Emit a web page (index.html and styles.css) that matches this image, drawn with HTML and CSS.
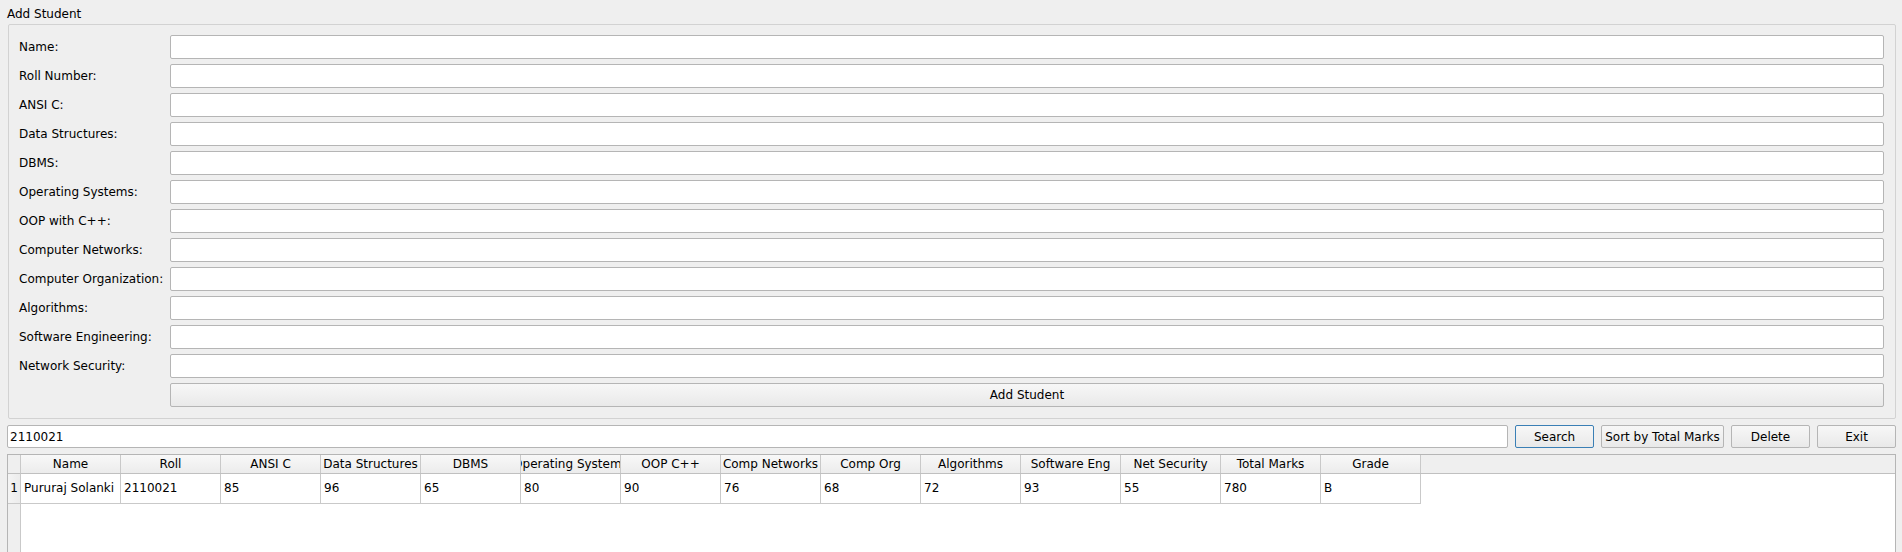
FILE: index.html
```html
<!DOCTYPE html>
<html>
<head>
<meta charset="utf-8">
<link rel="stylesheet" href="styles.css">
</head>
<body>
<div class="window">
  <div class="group-title">Add Student</div>
  <div class="group">
    <div class="form">
      <label class="lbl">Name:</label><input class="field" type="text">
      <label class="lbl">Roll Number:</label><input class="field" type="text">
      <label class="lbl">ANSI C:</label><input class="field" type="text">
      <label class="lbl">Data Structures:</label><input class="field" type="text">
      <label class="lbl">DBMS:</label><input class="field" type="text">
      <label class="lbl">Operating Systems:</label><input class="field" type="text">
      <label class="lbl">OOP with C++:</label><input class="field" type="text">
      <label class="lbl">Computer Networks:</label><input class="field" type="text">
      <label class="lbl">Computer Organization:</label><input class="field" type="text">
      <label class="lbl">Algorithms:</label><input class="field" type="text">
      <label class="lbl">Software Engineering:</label><input class="field" type="text">
      <label class="lbl">Network Security:</label><input class="field" type="text">
      <span></span><button class="btn add-btn">Add Student</button>
    </div>
  </div>
  <div class="search-row">
    <input class="field search" type="text" value="2110021">
    <button class="btn btn-focus w79">Search</button>
    <button class="btn w123">Sort by Total Marks</button>
    <button class="btn w79">Delete</button>
    <button class="btn w79">Exit</button>
  </div>
  <div class="table">
    <div class="corner"></div>
    <div class="hheader">
      <div class="hcell">Name</div>
      <div class="hcell">Roll</div>
      <div class="hcell">ANSI C</div>
      <div class="hcell">Data Structures</div>
      <div class="hcell">DBMS</div>
      <div class="hcell clip"><span>Operating Systems</span></div>
      <div class="hcell">OOP C++</div>
      <div class="hcell">Comp Networks</div>
      <div class="hcell">Comp Org</div>
      <div class="hcell">Algorithms</div>
      <div class="hcell">Software Eng</div>
      <div class="hcell">Net Security</div>
      <div class="hcell">Total Marks</div>
      <div class="hcell">Grade</div>
    </div>
    <div class="vheader">
      <div class="vcell">1</div>
    </div>
    <div class="tbody">
      <div class="trow">
        <div class="cell">Pururaj Solanki</div>
        <div class="cell">2110021</div>
        <div class="cell">85</div>
        <div class="cell">96</div>
        <div class="cell">65</div>
        <div class="cell">80</div>
        <div class="cell">90</div>
        <div class="cell">76</div>
        <div class="cell">68</div>
        <div class="cell">72</div>
        <div class="cell">93</div>
        <div class="cell">55</div>
        <div class="cell">780</div>
        <div class="cell">B</div>
      </div>
    </div>
  </div>
</div>
</body>
</html>
```

FILE: styles.css
```css
html, body {
  margin: 0;
  padding: 0;
  height: 100%;
  overflow: hidden;
  background: #efefef;
}

body {
  font-family: "DejaVu Sans", "Liberation Sans", sans-serif;
  font-size: 12px;
  color: #000;
}

.window {
  padding: 5px 6px 0 7px;
  display: flex;
  flex-direction: column;
}

.group-title {
  height: 19px;
  line-height: 18px;
}

.group {
  margin-left: 1px;
  border: 1px solid #d2d2d2;
  border-radius: 2px;
  padding: 10px 11px 11px 10px;
}

.form {
  display: grid;
  grid-template-columns: 151px 1fr;
  grid-auto-rows: 24px;
  row-gap: 5px;
  align-items: center;
}

.lbl {
  white-space: nowrap;
}

.field {
  box-sizing: border-box;
  height: 24px;
  border: 1px solid #b5b5b5;
  border-radius: 2px;
  background: #fff;
  font: inherit;
  color: #000;
  padding: 0 3px;
  margin: 0;
  outline: none;
  width: 100%;
}

.btn {
  box-sizing: border-box;
  height: 23px;
  border: 1px solid #b5b5b5;
  border-radius: 2px;
  background: linear-gradient(#f7f7f7, #e9e9e9);
  font: inherit;
  color: #000;
  padding: 0 3px;
  margin: 0;
  white-space: nowrap;
}

.add-btn {
  width: 100%;
  height: 24px;
  align-self: start;
}

.btn-focus {
  border-color: #3a7fb5;
}

.w79 { width: 79px; flex: none; }
.w123 { width: 123px; flex: none; }

.search-row {
  display: flex;
  gap: 7px;
  margin-top: 6px;
  height: 23px;
}

.search-row .search {
  flex: 1;
  height: 23px;
  padding-left: 2px;
}

.table {
  margin-top: 6px;
  height: 140px;
  border: 1px solid #b5b5b5;
  background: #fff;
  display: grid;
  grid-template-columns: 13px 1fr;
  grid-template-rows: 19px 1fr;
}

.corner {
  background: #efefef;
  border-right: 1px solid #c9c9c9;
  border-bottom: 1px solid #c0c0c0;
}

.hheader {
  display: flex;
  background: #efefef;
  border-bottom: 1px solid #c0c0c0;
}

.hcell {
  box-sizing: border-box;
  width: 100px;
  flex: none;
  border-right: 1px solid #c9c9c9;
  background: linear-gradient(#f8f8f8, #ececec);
  text-align: center;
  line-height: 18px;
  white-space: nowrap;
  overflow: hidden;
}

.hcell.clip {
  display: flex;
  justify-content: center;
}

.vheader {
  background: #efefef;
  border-right: 1px solid #c9c9c9;
}

.vcell {
  height: 29px;
  line-height: 29px;
  text-align: center;
  border-bottom: 1px solid #c9c9c9;
  background: linear-gradient(90deg, #f4f4f4, #ececec);
}

.tbody {
  background: #fff;
}

.trow {
  display: flex;
}

.cell {
  box-sizing: border-box;
  width: 100px;
  flex: none;
  height: 30px;
  line-height: 29px;
  padding-left: 3px;
  border-right: 1px solid #c9c9c9;
  border-bottom: 1px solid #c9c9c9;
  white-space: nowrap;
  overflow: hidden;
}
```
